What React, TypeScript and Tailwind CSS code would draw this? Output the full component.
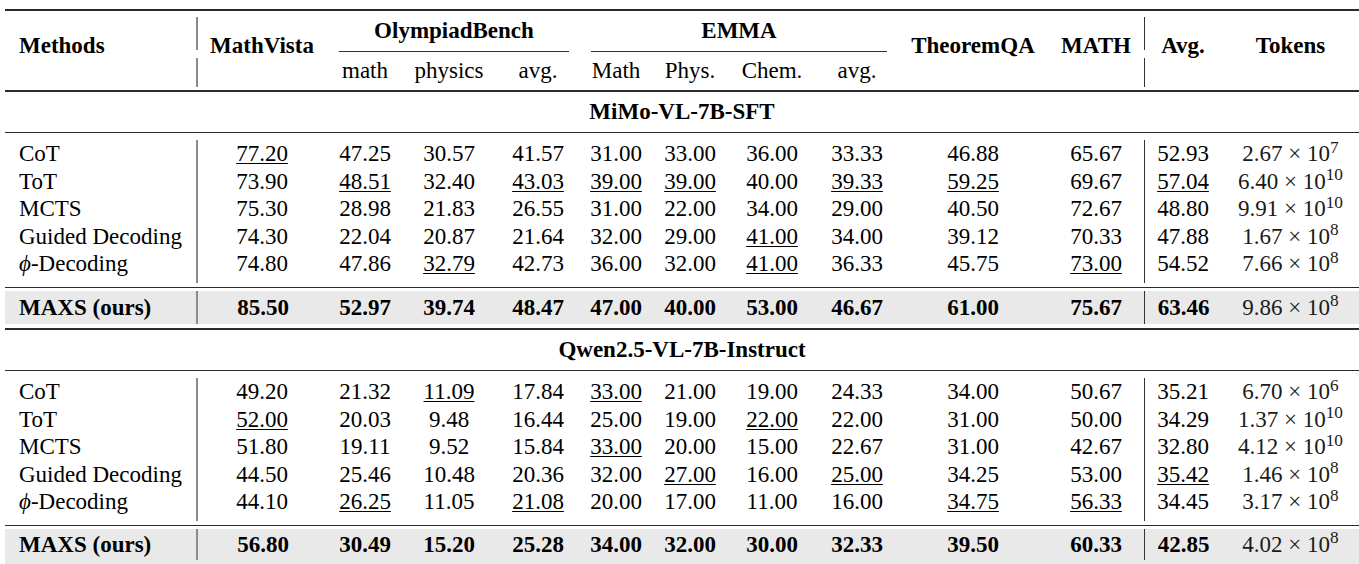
import clsx from "clsx";
import type { ReactNode } from "react";

type Row = { name: ReactNode; vals: string[]; tok: [string, string] };

const GRID =
  "grid grid-cols-[191px_132px_74px_94px_84px_72px_76px_88px_82px_150px_96px_78px_137px]";

const COL = [
  "col-start-1",
  "col-start-2",
  "col-start-3",
  "col-start-4",
  "col-start-5",
  "col-start-6",
  "col-start-7",
  "col-start-8",
  "col-start-9",
  "col-start-10",
  "col-start-11",
  "col-start-12",
  "col-start-13",
];
const ROW = [
  "row-start-1",
  "row-start-2",
  "row-start-3",
  "row-start-4",
  "row-start-5",
  "row-start-6",
  "row-start-7",
];

const phi = (
  <>
    <i>ϕ</i>-Decoding
  </>
);

const mimo: Row[] = [
  { name: "CoT", vals: ["_77.20", "47.25", "30.57", "41.57", "31.00", "33.00", "36.00", "33.33", "46.88", "65.67", "52.93"], tok: ["2.67", "7"] },
  { name: "ToT", vals: ["73.90", "_48.51", "32.40", "_43.03", "_39.00", "_39.00", "40.00", "_39.33", "_59.25", "69.67", "_57.04"], tok: ["6.40", "10"] },
  { name: "MCTS", vals: ["75.30", "28.98", "21.83", "26.55", "31.00", "22.00", "34.00", "29.00", "40.50", "72.67", "48.80"], tok: ["9.91", "10"] },
  { name: "Guided Decoding", vals: ["74.30", "22.04", "20.87", "21.64", "32.00", "29.00", "_41.00", "34.00", "39.12", "70.33", "47.88"], tok: ["1.67", "8"] },
  { name: phi, vals: ["74.80", "47.86", "_32.79", "42.73", "36.00", "32.00", "_41.00", "36.33", "45.75", "_73.00", "54.52"], tok: ["7.66", "8"] },
];
const mimoOurs: Row = { name: "MAXS (ours)", vals: ["85.50", "52.97", "39.74", "48.47", "47.00", "40.00", "53.00", "46.67", "61.00", "75.67", "63.46"], tok: ["9.86", "8"] };

const qwen: Row[] = [
  { name: "CoT", vals: ["49.20", "21.32", "_11.09", "17.84", "_33.00", "21.00", "19.00", "24.33", "34.00", "50.67", "35.21"], tok: ["6.70", "6"] },
  { name: "ToT", vals: ["_52.00", "20.03", "9.48", "16.44", "25.00", "19.00", "_22.00", "22.00", "31.00", "50.00", "34.29"], tok: ["1.37", "10"] },
  { name: "MCTS", vals: ["51.80", "19.11", "9.52", "15.84", "_33.00", "20.00", "15.00", "22.67", "31.00", "42.67", "32.80"], tok: ["4.12", "10"] },
  { name: "Guided Decoding", vals: ["44.50", "25.46", "10.48", "20.36", "32.00", "_27.00", "16.00", "_25.00", "34.25", "53.00", "_35.42"], tok: ["1.46", "8"] },
  { name: phi, vals: ["44.10", "_26.25", "11.05", "_21.08", "20.00", "17.00", "11.00", "16.00", "_34.75", "_56.33", "34.45"], tok: ["3.17", "8"] },
];
const qwenOurs: Row = { name: "MAXS (ours)", vals: ["56.80", "30.49", "15.20", "25.28", "34.00", "32.00", "30.00", "32.33", "39.50", "60.33", "42.85"], tok: ["4.02", "8"] };

function Val({ v, bold }: { v: string; bold?: boolean }) {
  const u = v.startsWith("_");
  return (
    <span
      className={clsx(
        u && "underline decoration-1 underline-offset-[2px]",
        bold && "font-bold"
      )}
    >
      {u ? v.slice(1) : v}
    </span>
  );
}

function Tok({ t }: { t: [string, string] }) {
  return (
    <span className="text-[#1a1a1a]">
      {t[0]} × 10<sup>{t[1]}</sup>
    </span>
  );
}

function Rule({ thick }: { thick?: boolean }) {
  return <div className={clsx("bg-[#2b2b2b]", thick ? "h-[2px]" : "h-[1.5px]")} />;
}

function Group({ title }: { title: string }) {
  return <div className="h-[40px] flex items-center justify-center font-bold">{title}</div>;
}

function Block({ rows }: { rows: Row[] }) {
  return (
    <div className={`${GRID} grid-rows-[7px_repeat(5,27.5px)_9px]`}>
      <div className="col-start-2 row-start-2 row-span-6 mb-[4px] border-l-2 border-[#8c8c8c]" />
      <div className="col-start-12 row-start-2 row-span-6 mb-[4px] border-l border-[#333]" />
      {rows.map((r, i) => (
        <div key={i} className="contents">
          <div className={clsx(COL[0], ROW[i + 1], "flex items-center pl-[14px]")}>{r.name}</div>
          {r.vals.map((v, j) => (
            <div key={j} className={clsx(COL[j + 1], ROW[i + 1], "flex items-center justify-center")}>
              <Val v={v} />
            </div>
          ))}
          <div className={clsx(COL[12], ROW[i + 1], "flex items-center justify-center")}>
            <Tok t={r.tok} />
          </div>
        </div>
      ))}
    </div>
  );
}

function Ours({ r, last }: { r: Row; last?: boolean }) {
  return (
    <div
      className={clsx(
        GRID,
        "mt-[3px] bg-[#e9e9e9]",
        last ? "h-[35px] pb-[4px]" : "h-[33px] mb-[4px]"
      )}
    >
      <div className="flex items-center pl-[14px] font-bold">{r.name}</div>
      {r.vals.map((v, j) => (
        <div
          key={j}
          className={clsx(
            "flex items-center justify-center",
            j === 0 && "border-l-2 border-[#8c8c8c]",
            j === 10 && "border-l border-[#333]"
          )}
        >
          <Val v={v} bold />
        </div>
      ))}
      <div className="flex items-center justify-center">
        <Tok t={r.tok} />
      </div>
    </div>
  );
}

function Header() {
  const span = "row-start-1 row-span-3 flex items-center justify-center pb-[8px] font-bold";
  const sub = "row-start-3 flex items-center justify-center pb-[4px]";
  return (
    <div className={`${GRID} grid-rows-[39px_8px_29px] mb-[3px]`}>
      <div className="col-start-2 row-start-1 mt-[6px] border-l-2 border-[#8c8c8c]" />
      <div className="col-start-2 row-start-3 border-l-2 border-[#8c8c8c]" />
      <div className="col-start-12 row-start-1 mt-[6px] border-l border-[#333]" />
      <div className="col-start-12 row-start-3 border-l border-[#333]" />

      <div className="col-start-1 row-start-1 row-span-3 flex items-center pl-[14px] pb-[8px] font-bold">
        Methods
      </div>
      <div className={clsx("col-start-2", span)}>MathVista</div>

      <div className="col-start-3 col-span-3 row-start-1 flex items-center justify-center font-bold">
        OlympiadBench
      </div>
      <div className="col-start-3 col-span-3 row-start-2 mx-[11px] mt-[1px] h-px bg-[#333]" />
      <div className={clsx("col-start-3", sub)}>math</div>
      <div className={clsx("col-start-4", sub)}>physics</div>
      <div className={clsx("col-start-5", sub)}>avg.</div>

      <div className="col-start-6 col-span-4 row-start-1 flex items-center justify-center font-bold">
        EMMA
      </div>
      <div className="col-start-6 col-span-4 row-start-2 mx-[11px] mt-[1px] h-px bg-[#333]" />
      <div className={clsx("col-start-6", sub)}>Math</div>
      <div className={clsx("col-start-7", sub)}>Phys.</div>
      <div className={clsx("col-start-8", sub)}>Chem.</div>
      <div className={clsx("col-start-9", sub)}>avg.</div>

      <div className={clsx("col-start-10", span)}>TheoremQA</div>
      <div className={clsx("col-start-11", span)}>MATH</div>
      <div className={clsx("col-start-12", span)}>Avg.</div>
      <div className={clsx("col-start-13", span)}>Tokens</div>
    </div>
  );
}

export default function App() {
  return (
    <div className="w-[1359px] h-[564px] overflow-hidden bg-white pt-[9px] pl-[5px] font-['Liberation_Serif','Times_New_Roman',serif] text-[23px] leading-none text-black">
      <Rule thick />
      <Header />
      <Rule />
      <Group title="MiMo-VL-7B-SFT" />
      <Rule />
      <Block rows={mimo} />
      <Rule />
      <Ours r={mimoOurs} />
      <Rule />
      <Group title="Qwen2.5-VL-7B-Instruct" />
      <Rule />
      <Block rows={qwen} />
      <Rule />
      <Ours r={qwenOurs} last />
    </div>
  );
}
